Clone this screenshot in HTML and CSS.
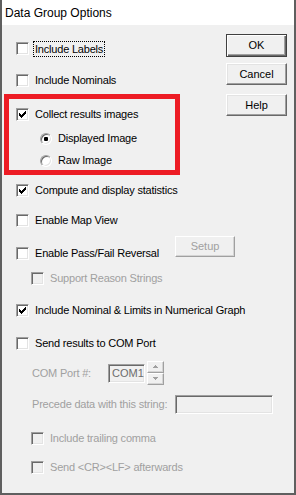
FILE: index.html
```html
<!DOCTYPE html>
<html lang="en">
<head>
  <meta charset="UTF-8">
  <title>Data Group Options</title>
  <link rel="stylesheet" href="styles.css">
</head>
<body>
  <div class="window">
    <div class="titlebar">Data Group Options</div>
    <div class="content">
      <div class="options">
        <div class="check row-first">
          <span class="box"></span>
          <span class="label focus">Include Labels</span>
        </div>
        <div class="check gap-19">
          <span class="box"></span>
          <span class="label">Include Nominals</span>
        </div>

        <div class="frame">
          <div class="check">
            <span class="box"><svg viewBox="1 1 11 11" width="11" height="11" shape-rendering="crispEdges"><path d="M3 5h1v3H3z M4 6h1v3H4z M5 7h1v3H5z M6 6h1v3H6z M7 5h1v3H7z M8 4h1v3H8z M9 3h1v3H9z" fill="#000"/></svg></span>
            <span class="label">Collect results images</span>
          </div>
          <div class="radio gap-11">
            <span class="dot checked"></span>
            <span class="label">Displayed Image</span>
          </div>
          <div class="radio gap-9">
            <span class="dot"></span>
            <span class="label">Raw Image</span>
          </div>
        </div>

        <div class="check gap-9">
          <span class="box"><svg viewBox="1 1 11 11" width="11" height="11" shape-rendering="crispEdges"><path d="M3 5h1v3H3z M4 6h1v3H4z M5 7h1v3H5z M6 6h1v3H6z M7 5h1v3H7z M8 4h1v3H8z M9 3h1v3H9z" fill="#000"/></svg></span>
          <span class="label">Compute and display statistics</span>
        </div>
        <div class="check gap-17">
          <span class="box"></span>
          <span class="label">Enable Map View</span>
        </div>
        <div class="check gap-20">
          <span class="box"></span>
          <span class="label wide">Enable Pass/Fail Reversal</span>
          <span class="btn setup disabled">Setup</span>
        </div>
        <div class="check sub gap-12">
          <span class="box disabled"></span>
          <span class="label disabled">Support Reason Strings</span>
        </div>
        <div class="check gap-19">
          <span class="box"><svg viewBox="1 1 11 11" width="11" height="11" shape-rendering="crispEdges"><path d="M3 5h1v3H3z M4 6h1v3H4z M5 7h1v3H5z M6 6h1v3H6z M7 5h1v3H7z M8 4h1v3H8z M9 3h1v3H9z" fill="#000"/></svg></span>
          <span class="label">Include Nominal &amp; Limits in Numerical Graph</span>
        </div>
        <div class="check gap-20">
          <span class="box"></span>
          <span class="label">Send results to COM Port</span>
        </div>

        <div class="field-row com-row">
          <span class="label disabled com-label">COM Port #:</span>
          <span class="field com">COM1</span>
          <span class="spin">
            <span class="spin-btn"><svg width="7" height="4" viewBox="0 0 7 4" shape-rendering="crispEdges"><path d="M3 0h1v1h1v1h1v1H1V2h1V1h1z" fill="#a0a0a0"/></svg></span>
            <span class="spin-btn"><svg width="7" height="4" viewBox="0 0 7 4" shape-rendering="crispEdges"><path d="M1 0h5v1H5v1H4v1H3V2H2V1H1z" fill="#a0a0a0"/></svg></span>
          </span>
        </div>
        <div class="field-row precede-row">
          <span class="label disabled precede-label">Precede data with this string:</span>
          <span class="field precede"></span>
        </div>

        <div class="check sub gap-18">
          <span class="box disabled"></span>
          <span class="label disabled">Include trailing comma</span>
        </div>
        <div class="check sub gap-16">
          <span class="box disabled"></span>
          <span class="label disabled">Send &lt;CR&gt;&lt;LF&gt; afterwards</span>
        </div>
      </div>

      <div class="actions">
        <span class="btn default">OK</span>
        <span class="btn cancel">Cancel</span>
        <span class="btn help">Help</span>
      </div>
    </div>
  </div>
</body>
</html>
```

FILE: styles.css
```css
* {
  box-sizing: border-box;
}
body {
  margin: 0;
  font-family: "Liberation Sans", Arial, sans-serif;
  font-size: 11px;
  letter-spacing: -0.2px;
  color: #000;
}
.window {
  width: 296px;
  height: 495px;
  background: #f0f0f0;
  border: 2px solid #5f5f5f;
  border-top: none;
  display: flex;
  flex-direction: column;
}
.titlebar {
  height: 25px;
  background: #fff;
  font-size: 12px;
  letter-spacing: 0;
  line-height: 26px;
  padding-left: 3px;
}
.content {
  flex: 1;
  display: flex;
}
.options {
  flex: 1;
  min-width: 0;
  padding-top: 17px;
  display: flex;
  flex-direction: column;
  align-items: flex-start;
}
.actions {
  width: 61px;
  flex: none;
  margin-right: 7px;
  padding-top: 9px;
  display: flex;
  flex-direction: column;
}

/* rows */
.check, .radio {
  display: flex;
  align-items: center;
  height: 13px;
  margin-left: 14px;
}
.check.sub {
  margin-left: 29px;
}
.label {
  margin-left: 6px;
  line-height: 13px;
  white-space: nowrap;
}
.label.focus {
  margin-left: 4px;
  padding: 0 1px;
  border: 1px dotted #000;
  line-height: 14px;
}
.label.wide {
  width: 140px;
}
.disabled {
  color: #a0a0a0;
}
.gap-9 { margin-top: 9px; }
.gap-11 { margin-top: 11px; }
.gap-12 { margin-top: 12px; }
.gap-16 { margin-top: 16px; }
.gap-17 { margin-top: 17px; }
.gap-18 { margin-top: 18px; }
.gap-19 { margin-top: 19px; }
.gap-20 { margin-top: 20px; }

/* checkbox */
.box {
  width: 13px;
  height: 13px;
  flex: none;
  background: #fff;
  border: 1px solid;
  border-color: #a0a0a0 #fff #fff #a0a0a0;
  box-shadow: inset 1px 1px #696969, inset -1px -1px #e3e3e3;
}
.box svg {
  display: block;
}
.box.disabled {
  background: #f0f0f0;
}

/* radio */
.radio {
  margin-left: 31px;
}
.dot {
  width: 12px;
  height: 12px;
  flex: none;
  border-radius: 50%;
  background: #fff;
  border: 1px solid;
  border-color: #a0a0a0 #fff #fff #a0a0a0;
  box-shadow: inset 1px 1px #696969, inset -1px -1px #e3e3e3;
  display: flex;
  align-items: center;
  justify-content: center;
}
.dot.checked::after {
  content: "";
  width: 4px;
  height: 4px;
  border-radius: 1px;
  background: #000;
}

/* red highlight */
.frame {
  width: 176px;
  margin-top: 7px;
  margin-left: 2px;
  padding: 9px 0 3px;
  border: 5px solid #ed1c24;
}
.frame .check {
  margin-left: 7px;
}

/* buttons */
.btn {
  display: block;
  height: 22px;
  background: #f0f0f0;
  border: 1px solid;
  border-color: #fff #696969 #696969 #fff;
  box-shadow: inset -1px -1px #a0a0a0, inset 1px 1px #e3e3e3;
  text-align: center;
  line-height: 20px;
  letter-spacing: 0;
}
.btn.default {
  height: 23px;
  border: 1px solid #404040;
  box-shadow: inset 1px 1px #fff, inset -1px -1px #696969, inset -2px -2px #a0a0a0;
  line-height: 21px;
}
.btn.cancel {
  margin-top: 6px;
}
.btn.help {
  margin-top: 9px;
}
.btn.setup {
  width: 60px;
  height: 21px;
  flex: none;
  line-height: 19px;
  align-self: flex-start;
  margin-top: -11px;
  border-color: #fff #a0a0a0 #a0a0a0 #fff;
  box-shadow: inset -1px -1px #d4d4d4;
}

/* COM port fields */
.field-row {
  display: flex;
  align-items: center;
  margin-left: 30px;
}
.com-row {
  margin-top: 11px;
  height: 24px;
}
.precede-row {
  margin-top: 10px;
  height: 19px;
}
.com-label {
  width: 76px;
  margin-left: 0;
}
.precede-label {
  width: 143px;
  margin-left: 0;
}
.field {
  height: 19px;
  flex: none;
  background: #f0f0f0;
  border: 1px solid;
  border-color: #a0a0a0 #fff #fff #a0a0a0;
  box-shadow: inset 1px 1px #696969, inset -1px -1px #e3e3e3;
  line-height: 17px;
  padding-left: 3px;
  color: #6d6d6d;
  letter-spacing: 0;
}
.field.com {
  width: 37px;
}
.field.precede {
  width: 98px;
}
.spin {
  display: flex;
  flex-direction: column;
  margin-left: 2px;
}
.spin-btn {
  width: 17px;
  height: 12px;
  background: #f0f0f0;
  border: 1px solid;
  border-color: #fff #a0a0a0 #a0a0a0 #fff;
  box-shadow: inset -1px -1px #d4d4d4;
  display: flex;
  align-items: center;
  justify-content: center;
}
.spin-btn svg {
  display: block;
}
```
